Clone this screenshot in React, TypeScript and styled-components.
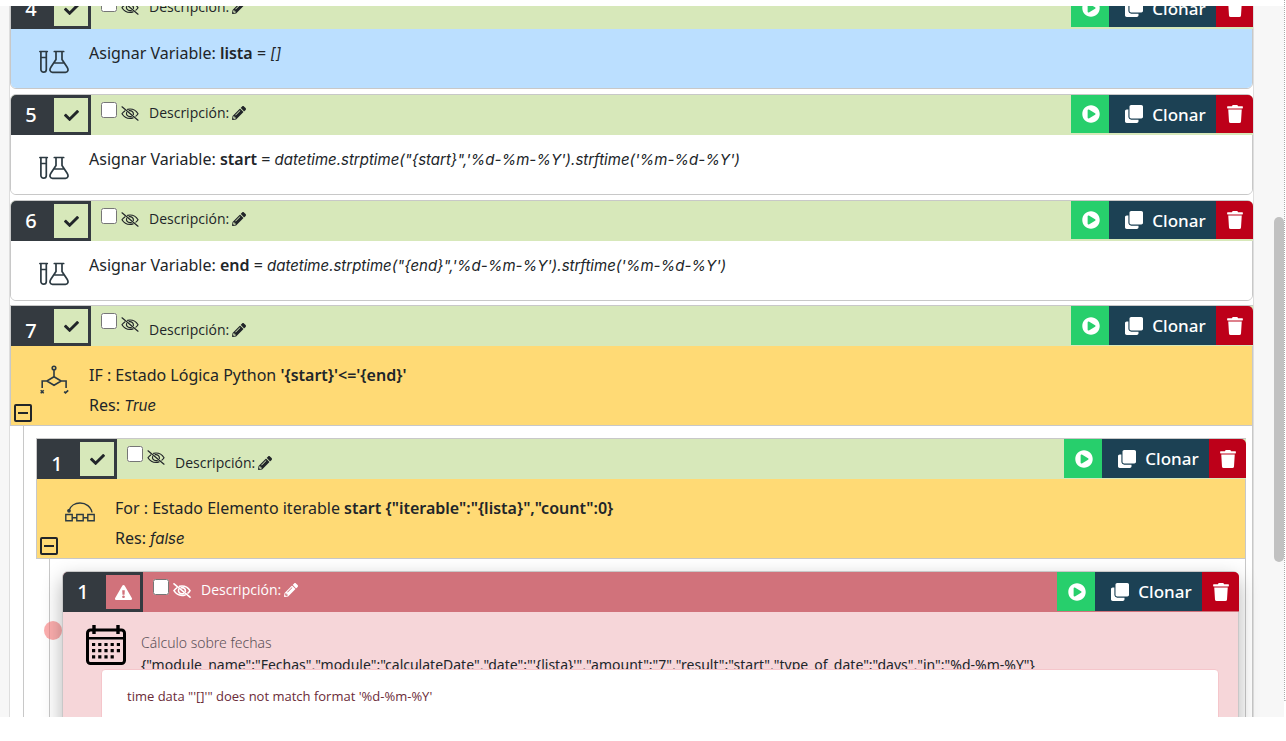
import React from 'react';
import styled, { createGlobalStyle } from 'styled-components';
import { FaCheck, FaClone, FaExclamationTriangle, FaPencilAlt, FaPlayCircle, FaTrash } from 'react-icons/fa';

const GlobalStyle = createGlobalStyle`
  *, *::before, *::after { box-sizing: border-box; }
  body {
    margin: 0;
    background: #fff;
    color: #212529;
    font-family: "Noto Sans", "Open Sans", sans-serif;
    font-size: 16px;
  }
  button { font-family: inherit; border: 0; padding: 0; cursor: pointer; }
  svg { display: block; flex: none; }
`;

const LINE = '#c8c8c8';
const DARK = '#343a40';

type Tone = 'ok' | 'error';

const Page = styled.div`
  display: flex;
  align-items: flex-start;
  height: 100vh;
  overflow: hidden;
`;

const Viewport = styled.main`
  position: relative;
  flex: 1;
  min-width: 0;
  height: calc(100vh - 30px);
  margin-top: 6px;
  padding: 0 30px 0 9px;
  overflow: hidden;
  background: #f7f7f7;
`;

const Divider = styled.div`
  width: 2px;
  height: calc(100vh - 40px);
  border-left: 1px dotted #aaa;
  border-bottom: 1px solid #c8c8c8;
`;

const ScrollThumb = styled.div`
  position: absolute;
  top: 211px;
  right: 0;
  width: 10px;
  height: 345px;
  border-radius: 5px;
  background: #c1c1c1;
`;

const CommandList = styled.div`
  display: flex;
  flex-direction: column;
  margin-top: -18px;
  border: solid #dedede;
  border-width: 0 1px;
  background: #fff;
`;

const Card = styled.article<{ $tone?: Tone }>`
  position: relative;
  margin-bottom: 5px;
  border: 1px solid ${LINE};
  border-radius: 6px;
  box-shadow: ${({ $tone }) => ($tone === 'error' ? '0 8px 20px rgba(0, 0, 0, 0.3)' : 'none')};
`;

const Group = styled.article`
  margin-top: -1px;
  border-right: 1px solid ${LINE};
`;

const NestedGroup = styled(Group)`
  margin-top: 0;
`;

const GroupTop = styled.div`
  border: solid ${LINE};
  border-width: 1px 0 1px 1px;
`;

const Lane = styled.div`
  position: relative;
  margin-left: 13px;
  padding: 12px 6px 0 12px;
  border-left: 1px solid ${LINE};
`;

const Header = styled.header<{ $tone: Tone; $group?: boolean }>`
  display: flex;
  align-items: flex-start;
  height: 40px;
  margin-right: -1px;
  border-radius: ${({ $group }) => ($group ? '0' : '5px 5px 0 0')};
  background: ${({ $tone }) => ($tone === 'error' ? '#d1727b' : '#d7e8ba')};
  color: ${({ $tone }) => ($tone === 'error' ? '#fff' : '#212529')};
`;

const Badge = styled.div<{ $group?: boolean }>`
  display: flex;
  width: 80px;
  height: 40px;
  padding: 3px;
  border-radius: ${({ $group }) => ($group ? '0' : '5px 0 0 0')};
  background: ${DARK};
`;

const Index = styled.span<{ $group?: boolean }>`
  flex: 1;
  padding-right: 6px;
  padding-top: ${({ $group }) => ($group ? '5px' : '0')};
  color: #fff;
  font-size: 20px;
  font-weight: 500;
  line-height: 34px;
  text-align: center;
`;

const Status = styled.span<{ $tone: Tone }>`
  display: grid;
  place-items: center;
  width: 34px;
  height: 34px;
  background: ${({ $tone }) => ($tone === 'error' ? '#d1727b' : '#d7e8ba')};
`;

const Tick = styled.input`
  width: 16px;
  height: 16px;
  margin: 7px 4px 0 10px;
`;

const HideButton = styled.button`
  margin: 11px 10px 0 0;
  background: none;
  color: inherit;
`;

const Description = styled.button<{ $tone: Tone; $group?: boolean }>`
  display: flex;
  align-items: center;
  gap: 3px;
  margin-top: ${({ $group }) => ($group ? '12px' : '6px')};
  background: none;
  color: inherit;
  font-family: "Open Sans", sans-serif;
  font-size: 14px;
  font-weight: ${({ $tone }) => ($tone === 'error' ? 500 : 400)};
  line-height: 24px;
`;

const Actions = styled.div<{ $tall?: boolean }>`
  display: flex;
  height: ${({ $tall }) => ($tall ? '39px' : '38px')};
  margin-left: auto;
`;

const Action = styled.button`
  display: flex;
  align-items: center;
  justify-content: center;
  color: #fff;
  font-size: 17px;
  font-weight: 500;
`;

const PlayAction = styled(Action)`
  width: 38px;
  padding-left: 2px;
  background: #27cf6c;
`;

const CloneAction = styled(Action)`
  gap: 9px;
  width: 107px;
  padding-left: 6px;
  background: #1c4154;
`;

const DeleteAction = styled(Action)`
  width: 37px;
  border-radius: 0 5px 0 0;
  background: #bd0019;
`;

const SimpleBody = styled.div<{ $active?: boolean }>`
  display: grid;
  grid-template-columns: 22px 42px 1fr;
  min-height: 59px;
  border-radius: 0 0 5px 5px;
  background: ${({ $active }) => ($active ? '#bbdfff' : '#fff')};
`;

const GroupBody = styled(SimpleBody)`
  min-height: 79px;
  border-radius: 0;
  background: #ffda75;
`;

const ErrorBody = styled(SimpleBody)`
  min-height: 180px;
  background: #f6d6d9;
`;

const IconCell = styled.div`
  display: grid;
  grid-column: 2;
  place-items: center;
  height: 66px;
  margin-bottom: -8px;
  color: #2c3a42;
`;

const Toggle = styled.button`
  grid-column: 1;
  grid-row: 1;
  align-self: end;
  margin: 0 0 3px 3px;
  background: none;
  color: #212529;
`;

const Content = styled.div<{ $group?: boolean }>`
  grid-column: 3;
  padding-top: ${({ $group }) => ($group ? '14px' : '9px')};
  padding-left: 14px;
`;

const Statement = styled.p`
  margin: 0;
  line-height: 30px;

  strong { font-weight: 600; }
  em { font-family: Inter, sans-serif; font-size: 15px; }
`;

const ModuleText = styled.div`
  grid-column: 3;
  padding: 20px 0 0 14px;
  font-size: 14px;
  line-height: 22px;
  white-space: nowrap;
`;

const ModuleName = styled.div`
  color: #5b5057;
  font-weight: 300;
`;

const ErrorMessage = styled.div`
  position: absolute;
  top: 97px;
  right: 19px;
  left: 38px;
  min-height: 120px;
  padding: 14px 25px;
  border: 1px solid #f5c6cb;
  border-radius: 4px;
  background: #fff;
  color: #6b2b38;
  font-family: "Open Sans", sans-serif;
  font-size: 13px;
  line-height: 24px;
`;

const Breakpoint = styled.span`
  position: absolute;
  top: 62px;
  left: -6px;
  width: 18px;
  height: 19px;
  border-radius: 50%;
  background: rgba(250, 120, 120, 0.6);
`;

const HiddenEye = ({ bold }: { bold?: boolean }) => (
  <svg width="18" height="15" viewBox="0 0 18 15" fill="none" stroke="currentColor" strokeWidth={bold ? 1.6 : 1.2} strokeLinecap="round">
    <path d="M1 .8 17 14.200" />
    <path d="M3.800 4.900C2.600 5.700 1.600 6.700 1 7.700c1.700 2.800 4.600 4.700 8 4.700 1.100 0 2.100-.2 3.100-.5" />
    <path d="M6.600 3.300C7.400 3.100 8.200 3 9 3c3.400 0 6.300 1.900 8 4.700-.5.900-1.200 1.700-2.100 2.400" />
    <path d="M5.600 6.600c-.7 2.100 1 4.100 3.400 4.100.5 0 .9-.1 1.300-.2M8.200 4.700c2.300-.4 4.500 1.300 4.200 3.600" />
  </svg>
);

const FlaskIcon = () => (
  <svg width="30" height="24" viewBox="0 0 30 24" fill="none" stroke="currentColor" strokeWidth="1.700" strokeLinecap="round" strokeLinejoin="round">
    <path d="M.9 1.500h7.400M1.900 1.500v18a2.700 2.700 0 0 0 5.400 0v-18M1.900 7.500h5.400" />
    <path d="M15.300 1.500h9.400M17 1.500v8l-5 7.500c-2 3 -.8 5.300 1.500 5.300h13c2.300 0 3.500-2.300 1.500-5.300l-5-7.500v-8M16 13h8" />
  </svg>
);

const BranchIcon = () => (
  <svg width="30" height="30" viewBox="0 0 30 30" fill="none" stroke="currentColor" strokeWidth="1.600">
    <circle cx="15" cy="4" r="1.800" />
    <path d="M15 6v6.500M15 12.700l7.200 4.300-7.200 4.300-7.200-4.300zM7.800 17H3.200v7M22.200 17h4.900v7" />
    <path d="m1.700 26.200 3 3M4.700 26.200l-3 3M25.200 27.600l1.300 1.300 2.700-2.600" />
  </svg>
);

const LoopIcon = () => (
  <svg width="30" height="20" viewBox="0 0 30 20" fill="none" stroke="currentColor" strokeWidth="1.400">
    <path d="M.8 12.500h6.400v6.200H.8zM11.800 12.500h6.400v6.200h-6.400zM22.800 12.500h6.400v6.200h-6.400zM7.200 15.700h4.600M18.200 15.700h4.600" />
    <path d="M4 8.800C5.400 3.800 10 1 15 1c6 0 11 3.700 12 9.500" />
    <circle cx="4" cy="8.800" r="1.200" fill="currentColor" />
  </svg>
);

const CalendarIcon = () => (
  <svg width="40" height="40" viewBox="0 0 40 40" fill="none" stroke="#000" strokeWidth="3">
    <rect x="1.500" y="5" width="37" height="33.500" rx="3" />
    <path d="M1.500 13.200h37" strokeWidth="2.600" />
    <path d="M8 0v9M32 0v9" strokeWidth="3.400" />
    <path d="M6 19.500h30M6 25.700h30M6 31.900h24" strokeWidth="3.200" strokeDasharray="3.200 3" />
  </svg>
);

const MinusBox = () => (
  <svg width="18" height="18" viewBox="0 0 18 18" fill="none" stroke="currentColor" strokeWidth="2">
    <rect x="1" y="1" width="16" height="16" rx="1" />
    <path d="M4 9h10" />
  </svg>
);

interface CommandHeaderProps {
  index: number;
  tone?: Tone;
  group?: boolean;
}

function CommandHeader({ index, tone = 'ok', group }: CommandHeaderProps) {
  return (
    <Header $tone={tone} $group={group}>
      <Badge $group={group}>
        <Index $group={group}>{index}</Index>
        <Status $tone={tone}>
          {tone === 'error' ? <FaExclamationTriangle size={17} /> : <FaCheck size={15} />}
        </Status>
      </Badge>
      <Tick type="checkbox" aria-label={`Seleccionar ${index}`} />
      <HideButton aria-label="Ocultar"><HiddenEye bold={tone === 'error'} /></HideButton>
      <Description $tone={tone} $group={group}>
        Descripción: <FaPencilAlt size={14} />
      </Description>
      <Actions $tall={group || tone === 'error'}>
        <PlayAction aria-label="Ejecutar"><FaPlayCircle size={18} /></PlayAction>
        <CloneAction><FaClone size={18} />Clonar</CloneAction>
        <DeleteAction aria-label="Eliminar"><FaTrash size={18} /></DeleteAction>
      </Actions>
    </Header>
  );
}

interface AssignProps {
  index: number;
  name: string;
  value: string;
  active?: boolean;
}

function AssignCard({ index, name, value, active }: AssignProps) {
  return (
    <Card>
      <CommandHeader index={index} />
      <SimpleBody $active={active}>
        <IconCell><FlaskIcon /></IconCell>
        <Content>
          <Statement>Asignar Variable: <strong>{name}</strong> = <em>{value}</em></Statement>
        </Content>
      </SimpleBody>
    </Card>
  );
}

interface GroupHeadProps {
  index: number;
  icon: React.ReactNode;
  label: string;
  detail: string;
  result: string;
}

function GroupHead({ index, icon, label, detail, result }: GroupHeadProps) {
  return (
    <GroupTop>
      <CommandHeader index={index} group />
      <GroupBody>
        <Toggle aria-label="Contraer"><MinusBox /></Toggle>
        <IconCell>{icon}</IconCell>
        <Content $group>
          <Statement>{label} <strong>{detail}</strong></Statement>
          <Statement>Res: <em>{result}</em></Statement>
        </Content>
      </GroupBody>
    </GroupTop>
  );
}

export default function App() {
  return (
    <>
      <GlobalStyle />
      <Page>
        <Viewport>
          <CommandList>
            <AssignCard index={4} name="lista" value="[]" active />
            <AssignCard index={5} name="start" value={`datetime.strptime("{start}",'%d-%m-%Y').strftime('%m-%d-%Y')`} />
            <AssignCard index={6} name="end" value={`datetime.strptime("{end}",'%d-%m-%Y').strftime('%m-%d-%Y')`} />
            <Group>
              <GroupHead index={7} icon={<BranchIcon />} label="IF : Estado Lógica Python" detail="'{start}'<='{end}'" result="True" />
              <Lane>
                <NestedGroup>
                  <GroupHead index={1} icon={<LoopIcon />} label="For : Estado Elemento iterable" detail={`start {"iterable":"{lista}","count":0}`} result="false" />
                  <Lane>
                    <Breakpoint />
                    <Card $tone="error">
                      <CommandHeader index={1} tone="error" />
                      <ErrorBody>
                        <IconCell><CalendarIcon /></IconCell>
                        <ModuleText>
                          <ModuleName>Cálculo sobre fechas</ModuleName>
                          {`{"module_name":"Fechas","module":"calculateDate","date":"'{lista}'","amount":"7","result":"start","type_of_date":"days","in":"%d-%m-%Y"}`}
                        </ModuleText>
                      </ErrorBody>
                      <ErrorMessage role="alert">{`time data "'[]'" does not match format '%d-%m-%Y'`}</ErrorMessage>
                    </Card>
                  </Lane>
                </NestedGroup>
              </Lane>
            </Group>
          </CommandList>
          <ScrollThumb />
        </Viewport>
        <Divider />
      </Page>
    </>
  );
}
